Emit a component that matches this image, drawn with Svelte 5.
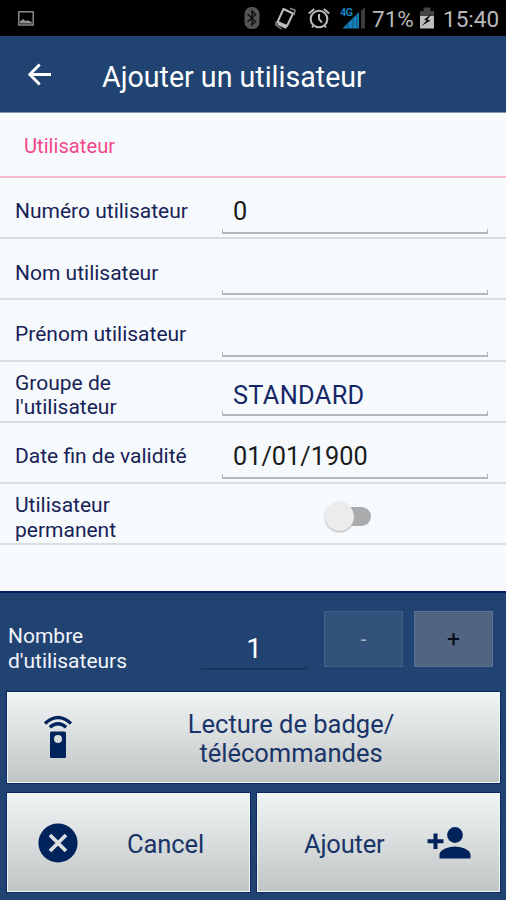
<script>
	let count = 1;
	let permanent = false;

	const fields = [
		{ label: 'Numéro utilisateur', value: '0' },
		{ label: 'Nom utilisateur', value: '' },
		{ label: 'Prénom utilisateur', value: '' },
		{ label: "Groupe de l'utilisateur", value: 'STANDARD', select: true },
		{ label: 'Date fin de validité', value: '01/01/1900' }
	];
</script>

<div class="screen">
	<div class="status">
		<svg class="shot" width="16" height="15" viewBox="0 0 16 15">
			<rect x="0.8" y="0.8" width="14.4" height="13.2" fill="none" stroke="#929292" stroke-width="1.4" />
			<path d="M2 12.5v-2L5 8l2.5 2 2-.8 4.500 2v1.300z" fill="#929292" />
		</svg>
		<svg class="bt" width="16" height="24" viewBox="0 0 16 24">
			<rect x="0.5" y="1" width="15" height="22" rx="7" fill="#555" />
			<path d="M3.5 8l8 7.5L8 19V5l3.5 3.5-8 7.5" fill="none" stroke="#111" stroke-width="1.5" />
		</svg>
		<svg class="rot" width="22" height="25" viewBox="0 0 22 25">
			<path d="M8.5 3L18 7.5 12 20l-9.500-4z" fill="none" stroke="#bdbdbd" stroke-width="2" stroke-linejoin="round" />
			<path d="M15 2.2l5 2-1 5M1.2 15.5L.9 19l5.5 4" fill="none" stroke="#8a8a8a" stroke-width="1.5" />
			<path d="M2.5 16l9.5 4-.8 3-8.6-4z" fill="#bdbdbd" />
		</svg>
		<svg class="alarm" width="24" height="24" viewBox="0 0 24 24">
			<circle cx="12" cy="13" r="8.3" fill="none" stroke="#b9b9b9" stroke-width="2.1" />
			<path d="M12 8v5.2l3 3.4M1.8 7.5l5.4-4.6M22.2 7.5l-5.4-4.6M6.5 19.5L5 21.5M17.5 19.5l1.5 2" fill="none" stroke="#b9b9b9" stroke-width="2" />
		</svg>
		<svg class="signal" width="27" height="24" viewBox="0 0 27 24">
			<text x="0" y="10" font-size="11" font-weight="700" fill="#1680b8" textLength="13">4G</text>
			<path d="M2.5 22.5L19 6v16.5z" fill="#1680b8" />
			<path d="M8 15.5v7M13 11v12M17 8v15" stroke="#0d4c70" stroke-width="0.8" />
			<path d="M21 4.5l4-3v21h-4z" fill="#3c3c3c" />
		</svg>
		<span class="pct">71%</span>
		<svg class="bat" width="16" height="24" viewBox="0 0 16 24">
			<path d="M4.5 1.5h7V5H15v5.5H1V5h3.5z" fill="#454545" />
			<path d="M1 10h14v12.5H1z" fill="#bebebe" />
			<path d="M13 7.5l-8 6 2.5 1-5 5.5 9-5.5-3-1z" fill="#0c0c0c" />
		</svg>
		<span class="time">15:40</span>
	</div>

	<header>
		<svg class="back" width="24" height="23" viewBox="0 0 24 23">
			<path d="M23 11.5H2M11.7 1.5l-10 10 10 10" fill="none" stroke="#fff" stroke-width="2.9" />
		</svg>
		<h1>Ajouter un utilisateur</h1>
	</header>

	<main>
		<h2><span>Utilisateur</span></h2>
		{#each fields as field}
			<div class="row">
				<div class="label">{field.label}</div>
				<div class="field" class:select={field.select}>
					<span class="value">{field.value}</span>
					<i class="line"></i>
				</div>
			</div>
		{/each}
		<div class="row">
			<div class="label narrow">Utilisateur permanent</div>
			<button class="switch" aria-label="Utilisateur permanent" aria-pressed={permanent} on:click={() => (permanent = !permanent)}>
				<i class="thumb"></i><i class="track"></i>
			</button>
		</div>
	</main>

	<footer>
		<div class="count">
			<div class="count-label">Nombre d'utilisateurs</div>
			<div class="number">
				<span>{count}</span>
				<i class="line"></i>
			</div>
			<button class="step minus" disabled={count <= 1} on:click={() => (count -= 1)}>-</button>
			<button class="step plus" on:click={() => (count += 1)}>+</button>
		</div>

		<button class="action badge">
			<svg width="30" height="46" viewBox="0 0 30 46">
				<path d="M2 9.5Q15-2.5 28 9.5M6.8 13.2q8.2-7 16.4 0" fill="none" stroke="#00235b" stroke-width="3.4" />
				<path fill-rule="evenodd" d="M8.5 17.5h13A1.5 1.5 0 0 1 23 19v23.5a1.5 1.5 0 0 1-1.5 1.5h-13A1.5 1.5 0 0 1 7 42.5V19a1.5 1.5 0 0 1 1.5-1.5zM15 21a4 4 0 1 0 0 8 4 4 0 0 0 0-8z" fill="#00235b" />
			</svg>
			<span>Lecture de badge/<br />télécommandes</span>
		</button>

		<div class="actions">
			<button class="action cancel">
				<svg width="40" height="40" viewBox="0 0 40 40">
					<circle cx="20" cy="20" r="19.6" fill="#00235b" />
					<path d="M12 12l16 16M28 12L12 28" stroke="#dce0e1" stroke-width="3.8" />
				</svg>
				<span>Cancel</span>
			</button>
			<button class="action add">
				<span>Ajouter</span>
				<svg width="44" height="32" viewBox="0 0 44 32">
					<circle cx="28" cy="8" r="7.9" fill="#00235b" />
					<path d="M12.5 31.5v-4c0-5.3 10.3-8 15.5-8s15.5 2.7 15.5 8v4zM6.500 6.500h4v5.800h6v3.900h-6V22h-4v-5.800h-6v-3.900h6z" fill="#00235b" />
				</svg>
			</button>
		</div>
	</footer>
</div>

<style>
	:global(body) {
		margin: 0;
	}

	.screen {
		width: 506px;
		height: 900px;
		display: flex;
		flex-direction: column;
		overflow: hidden;
		font-family: Roboto, sans-serif;
		background: #f6fafd;
	}

	button {
		font: inherit;
		margin: 0;
		padding: 0;
		border: 0;
		box-sizing: border-box;
	}

	svg {
		display: block;
		flex: none;
	}

	.status {
		height: 36px;
		flex: none;
		display: flex;
		align-items: center;
		background: #000;
		color: #b9b9b9;
		font-size: 22.5px;
		white-space: nowrap;
	}

	.status span {
		padding-top: 1px;
	}

	.shot { margin-left: 18px; }
	.bt { margin-left: 210px; }
	.rot { margin-left: 15px; }
	.alarm { margin-left: 10px; }
	.signal { margin-left: 9px; }
	.pct { width: 42px; margin-left: 5px; }
	.bat { margin-left: 5px; }
	.time { margin-left: 8px; }

	header {
		height: 77px;
		flex: none;
		display: flex;
		align-items: center;
		background: #214371;
		border-bottom: 1px solid #8494ac;
		box-sizing: border-box;
	}

	.back {
		margin: 1px 0 0 28px;
	}

	h1 {
		margin: 5px 0 0 50px;
		font-size: 28.6px;
		font-weight: 400;
		color: #fff;
		white-space: nowrap;
	}

	main {
		flex: none;
		height: 478px;
	}

	h2 {
		height: 65px;
		box-sizing: border-box;
		margin: 0;
		padding: 3px 0 0 24px;
		display: flex;
		align-items: center;
		font-size: 20.2px;
		font-weight: 400;
		color: #f2488a;
		border-bottom: 2px solid #f9bccd;
	}

	.row {
		height: 61.2px;
		box-sizing: border-box;
		display: flex;
		align-items: center;
		border-bottom: 2px solid #dbdfe3;
	}

	.label {
		width: 207px;
		box-sizing: border-box;
		padding: 8px 0 0 15px;
		font-size: 21px;
		line-height: 24.5px;
		color: #172257;
	}

	.narrow {
		padding-right: 60px;
	}

	.field {
		width: 266px;
		height: 100%;
		margin-left: 15px;
		box-sizing: border-box;
		padding-bottom: 3px;
		display: flex;
		flex-direction: column;
		justify-content: flex-end;
		color: #1b1b1b;
	}

	.value {
		padding: 0 0 2px 11px;
		font-size: 25.3px;
		line-height: 30px;
	}

	.select {
		padding-bottom: 5px;
		color: #152767;
	}

	.select .value {
		padding-bottom: 0;
		letter-spacing: 0.35px;
	}

	.line {
		height: 5px;
		box-sizing: border-box;
		border: solid #b3b8bd;
		border-width: 0 1px 2px;
	}

	.switch {
		margin: 5px 0 0 118px;
		display: flex;
		align-items: center;
		background: none;
	}

	.thumb {
		width: 29px;
		height: 29px;
		border-radius: 50%;
		background: #ececec;
		box-shadow: 0 1px 2px #aaa;
		z-index: 1;
	}

	.track {
		width: 32px;
		height: 19px;
		margin-left: -15px;
		border-radius: 10px;
		background: #a9abad;
	}

	footer {
		flex: 1;
		box-sizing: border-box;
		border-top: 2px solid #0a1b62;
		background: #214371;
	}

	.count {
		height: 99px;
		display: flex;
		align-items: flex-start;
	}

	.count-label {
		width: 130px;
		margin: 31px 0 0 8px;
		font-size: 21px;
		line-height: 24.5px;
		color: #f1f4fa;
	}

	.number {
		width: 106px;
		margin: 39px 0 0 63px;
		display: flex;
		flex-direction: column;
		font-size: 28px;
		line-height: 33px;
		text-align: center;
		color: #fff;
	}

	.number .line {
		border-color: #1a345a;
	}

	.step {
		width: 79px;
		height: 56px;
		margin-top: 18px;
		border: 1px solid #476081;
		font-size: 20px;
	}

	.minus {
		margin-left: 17px;
		background: #32527b;
		color: #a9b6c8;
	}

	.plus {
		margin-left: 11px;
		background: #50657f;
		border-color: #5d7290;
		font-size: 23px;
		color: #080c14;
	}

	.action {
		display: flex;
		align-items: center;
		background: linear-gradient(#eff4f4, #c2c5c5);
		border: 1px solid #f3f7fa;
		box-shadow: 0 0 0 1px #0a2866;
		font-size: 25.5px;
		line-height: 29.5px;
		color: #193468;
	}

	.action span {
		padding-top: 4px;
	}

	.badge {
		width: 493px;
		height: 91px;
		margin-left: 7px;
		padding-left: 35px;
	}

	.badge svg {
		margin-bottom: 1px;
	}

	.badge span {
		width: 300px;
		margin-left: 68px;
		padding-top: 3px;
		text-align: center;
	}

	.actions {
		display: flex;
		gap: 7px;
		margin: 10px 0 0 7px;
	}

	.actions .action {
		width: 243px;
		height: 99px;
	}

	.cancel {
		padding-left: 30px;
	}

	.cancel span {
		margin-left: 49px;
		letter-spacing: -0.1px;
	}

	.add {
		padding-left: 46px;
	}

	.add span {
		letter-spacing: -0.2px;
	}

	.add svg {
		margin-left: 43px;
	}
</style>
